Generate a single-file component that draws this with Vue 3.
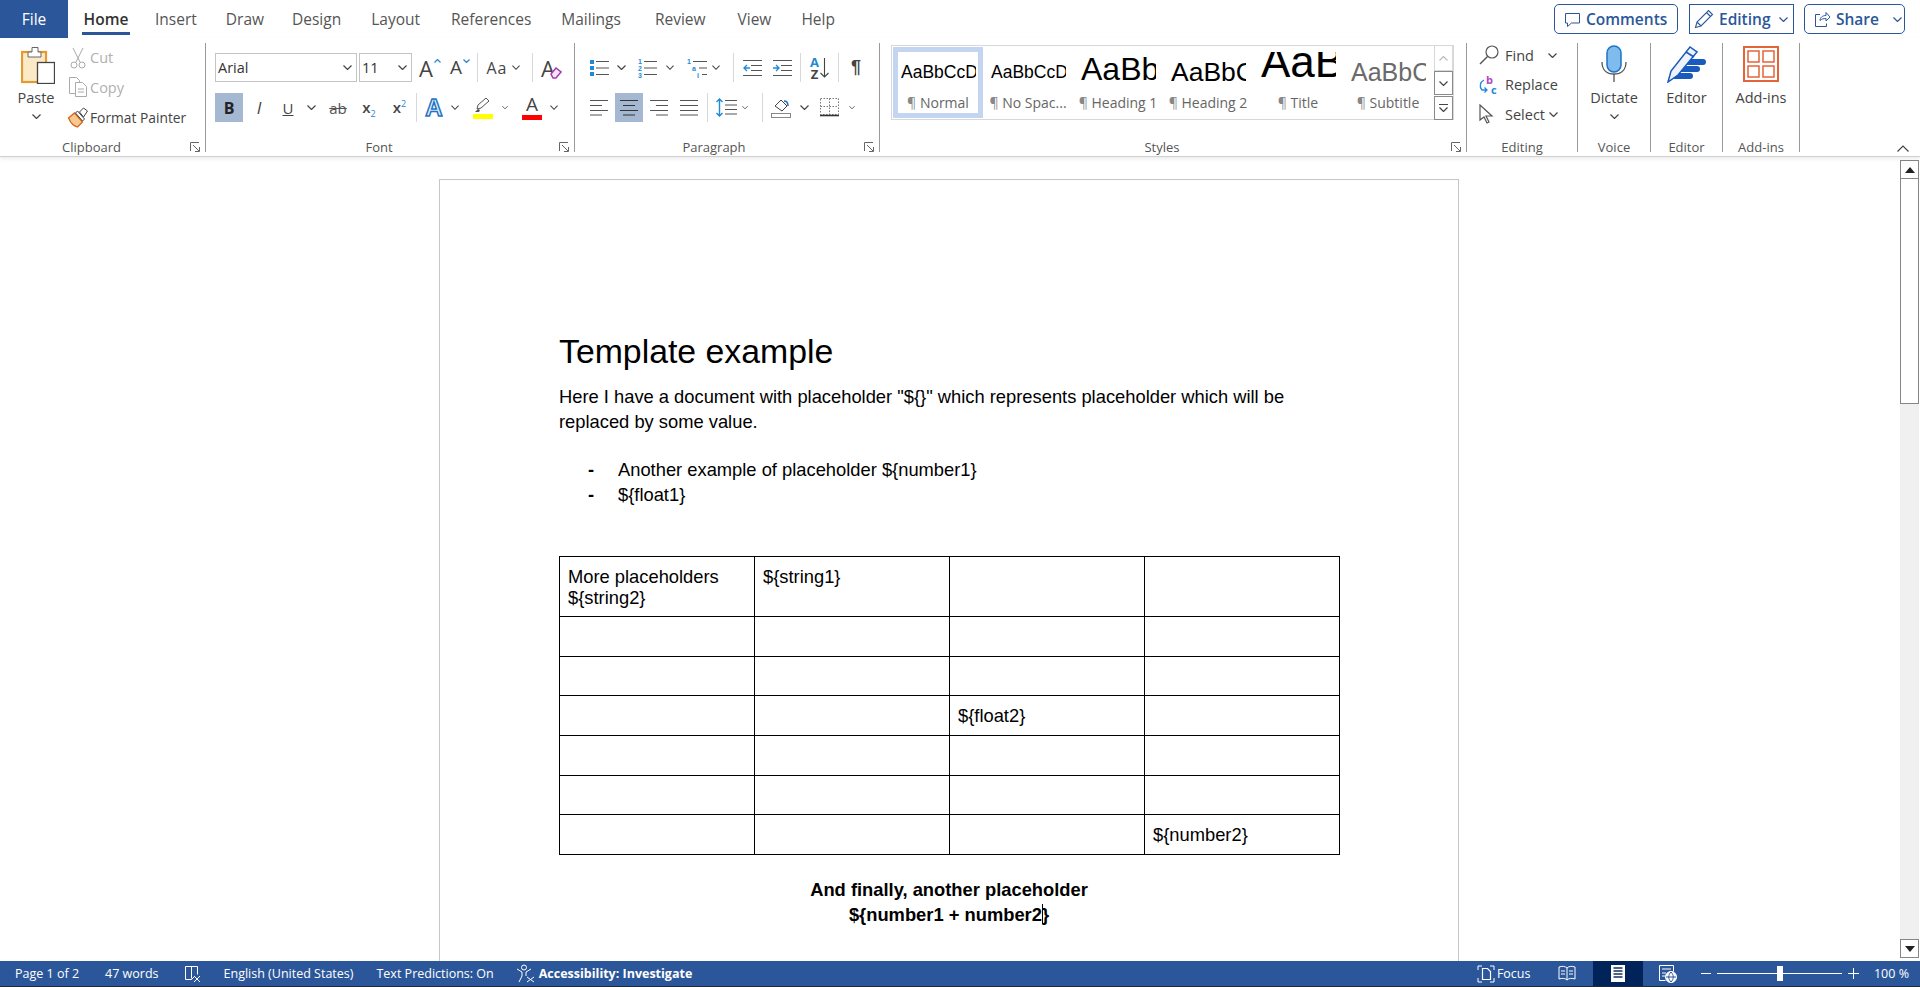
<template>
  <div class="word">
    <!-- tabs -->
    <div class="tabs">
      <div class="file">File</div>
      <div v-for="t in tabs" :key="t.name" class="tab" :class="[t.cls, { on: t.name === 'Home' }]">{{ t.name }}</div>
      <div class="top-actions">
        <button class="act comments">
          <svg width="17" height="17" viewBox="0 0 17 17" fill="none" stroke="#2b579a"><path d="M1.5 2.5h14v9.5h-8l-4 3.5v-3.5h-2z" /></svg>
          Comments
        </button>
        <button class="act editing">
          <svg width="20" height="20" viewBox="0 0 20 20" fill="none" stroke="#2b579a" stroke-width="1.1"><path d="M1.5 18.5l1.5-5.5L14.5 1.5l4 4L7 17z M3 13l4 4 M12.5 3.5l4 4" /></svg>
          Editing
          <Chev color="#2b579a" class="act-chev" />
        </button>
        <button class="act share">
          <svg width="17" height="17" viewBox="0 0 17 17" fill="none" stroke="#2b579a"><path d="M6 9.5c0-3 2.5-5 6-5V1.500l4 4.500-4 4V7.500c-2.500 0-4.500.5-6 2zM6 3.500H1.500v12h11v-3" /></svg>
          Share
          <Chev color="#2b579a" class="share-chev" />
        </button>
      </div>
    </div>

    <!-- ribbon -->
    <div class="ribbon">
      <section class="group g-clip">
        <div class="clip-body">
          <div class="big paste">
            <svg width="34" height="38" viewBox="0 0 34 38">
              <rect x="1" y="6" width="24" height="30" fill="#fbe9c8" stroke="#e59a2f" stroke-width="2.200" />
              <path d="M7 11V6h4V1.500h6V6h3v5z" fill="#fff" stroke="#666" />
              <rect x="16.500" y="16.500" width="17" height="21" fill="#fff" stroke="#444" stroke-width="1.300" />
            </svg>
            <span class="big-text">Paste</span>
            <Chev class="big-chev" />
          </div>
          <div class="clip-col">
            <div class="clip-row off">
              <svg width="16" height="22" viewBox="0 0 16 22" fill="none" stroke="#aaa"><path d="M3 1l7 14M13 1L6 15" /><circle cx="4" cy="18" r="3" /><circle cx="12" cy="18" r="3" /></svg>
              <span>Cut</span>
            </div>
            <div class="clip-row off">
              <svg width="20" height="22" viewBox="0 0 20 22" fill="#fff" stroke="#aaa"><path d="M1.500 1.500h7l3 3v13h-10z" /><path d="M7.500 6.500h7l4 4v10h-11z" /><path d="M10 13h6M10 16h6" /></svg>
              <span>Copy</span>
            </div>
            <div class="clip-row painter">
              <svg width="21" height="21" viewBox="0 0 21 21"><path d="M1 11l6-5 8 9-5 5c-3-1-6-2-9-9z" fill="#f8c98f" stroke="#d8641b" stroke-width="1.300" /><path d="M8 6l7 8 2-2-7-8z" fill="#fff" stroke="#444" /><path d="M12 5l4-4 4 3-4 6z" fill="#fff" stroke="#444" /></svg>
              <span>Format Painter</span>
            </div>
          </div>
        </div>
        <div class="glabel clip-label">Clipboard</div>
        <Launch />
      </section>

      <section class="group g-font">
        <div class="row r1">
          <div class="combo name">Arial<Chev /></div>
          <div class="combo size">11<Chev /></div>
          <span class="w-3" />
          <div class="tb w-30"><span class="ga lg">A</span><svg class="caret-up" width="7" height="4" viewBox="0 0 7 4" fill="none" stroke="#2b88d8" stroke-width="1.300"><path d="M.5 3.500L3.500.5l3 3" /></svg></div>
          <div class="tb w-30"><span class="ga md">A</span><svg class="caret-up" width="7" height="4" viewBox="0 0 7 4" fill="none" stroke="#2b88d8" stroke-width="1.300"><path d="M.5.5l3 3 3-3" /></svg></div>
          <span class="w-2" /><i class="sep" /><span class="w-4" />
          <div class="tb w-30"><span class="ga aa">Aa</span></div>
          <div class="tb w-8"><Chev /></div>
          <span class="w-12" /><i class="sep" />
          <div class="tb w-37">
            <span class="ga lg">A</span>
            <svg class="eraser" width="12" height="12" viewBox="0 0 12 12"><path d="M1 7l5-6 5 4-5 6H3z" fill="#f4e4f6" stroke="#a23fb0" stroke-width="1.500" /></svg>
          </div>
        </div>
        <div class="row r2">
          <div class="tb w-28 active"><b class="bold-b">B</b></div>
          <div class="tb w-32"><i class="ital">I</i></div>
          <div class="tb w-26"><span class="und">U</span></div>
          <div class="tb w-20"><Chev /></div>
          <div class="tb w-34"><span class="strike">ab</span></div>
          <div class="tb w-28"><span class="xs">x<sub>2</sub></span></div>
          <div class="tb w-33"><span class="xs">x<sup>2</sup></span></div>
          <i class="sep" />
          <div class="tb w-34"><span class="fx">A</span></div>
          <div class="tb w-8"><Chev /></div>
          <span class="w-5" />
          <div class="tb w-38 stack">
            <svg width="20" height="16" viewBox="0 0 20 16"><path d="M4 12l1-4 8-7 3 3-8 7z" fill="#fff" stroke="#555" /><path d="M2 15l3-3 2 1-1 2z" fill="#555" /></svg>
            <i class="bar yellow" />
          </div>
          <div class="tb w-6"><Chev /></div>
          <span class="w-6" />
          <div class="tb w-36 stack">
            <span class="ga fc">A</span>
            <i class="bar red" />
          </div>
          <div class="tb w-8"><Chev /></div>
        </div>
        <div class="glabel font-label">Font</div>
        <Launch />
      </section>

      <section class="group g-para">
        <div class="row r1">
          <div class="tb w-30">
            <svg width="20" height="20" viewBox="0 0 20 20"><path d="M1 2h4v4H1zM1 8h4v4H1zM1 14h4v4H1z" fill="#1f8ad6" /><path d="M7 3.500h13M7 10h13M7 16.500h13" stroke="#555" stroke-width="1.200" /></svg>
          </div>
          <div class="tb w-14"><Chev /></div>
          <div class="tb w-38">
            <svg class="ico" width="20" height="20" viewBox="0 0 20 20"><text x="1" y="6" class="nm">1</text><text x="1" y="13" class="nm">2</text><text x="1" y="20" class="nm">3</text><path d="M7 3.500h13M7 10h13M7 16.500h13" stroke="#555" stroke-width="1.200" /></svg>
          </div>
          <div class="tb w-8"><Chev /></div>
          <span class="w-8" />
          <div class="tb w-30">
            <svg class="ico" width="20" height="20" viewBox="0 0 20 20"><text x="0" y="6" class="nm">1</text><text x="5" y="13" class="nm">a</text><text x="10" y="20" class="nm">i</text><path d="M6 3.500h14M12 10h8M15 16.500h5" stroke="#555" stroke-width="1.200" /></svg>
          </div>
          <div class="tb w-8"><Chev /></div>
          <span class="w-13" /><i class="sep" />
          <div class="tb w-36">
            <svg width="19" height="18" viewBox="0 0 19 18" fill="none"><path d="M0 1.500h19M8 6.500h11M8 11.500h11M0 16.500h19" stroke="#555" stroke-width="1.200" /><path d="M7 9H1M4 6L1 9l3 3" stroke="#1f8ad6" stroke-width="1.300" /></svg>
          </div>
          <div class="tb w-24">
            <svg width="19" height="18" viewBox="0 0 19 18" fill="none"><path d="M0 1.500h19M8 6.500h11M8 11.500h11M0 16.500h19" stroke="#555" stroke-width="1.200" /><path d="M0 9h6M3 6l3 3-3 3" stroke="#1f8ad6" stroke-width="1.300" /></svg>
          </div>
          <span class="w-6" /><i class="sep" />
          <div class="tb w-37">
            <div class="sort-az"><span class="az-a">A</span><span class="az-z">Z</span></div>
            <svg width="9" height="20" viewBox="0 0 9 20" fill="none" stroke="#444" stroke-width="1.100"><path d="M4.500 0v19M.5 15l4 4 4-4" /></svg>
          </div>
          <i class="sep" />
          <div class="tb w-34"><span class="pil">¶</span></div>
        </div>
        <div class="row r2">
          <div class="tb w-30"><svg width="18" height="17" viewBox="0 0 18 17" stroke="#555" stroke-width="1.200"><path d="M0 1.500h18M0 6.500h12M0 11.500h18M0 16h12" /></svg></div>
          <span class="w-1" />
          <div class="tb w-28 active"><svg width="18" height="17" viewBox="0 0 18 17" stroke="#333" stroke-width="1.200"><path d="M0 1.500h18M3 6.500h12M0 11.500h18M3 16h12" /></svg></div>
          <div class="tb w-32"><svg width="18" height="17" viewBox="0 0 18 17" stroke="#555" stroke-width="1.200"><path d="M0 1.500h18M6 6.500h12M0 11.500h18M6 16h12" /></svg></div>
          <div class="tb w-28"><svg width="18" height="17" viewBox="0 0 18 17" stroke="#555" stroke-width="1.200"><path d="M0 1.500h18M0 6.500h18M0 11.500h18M0 16h18" /></svg></div>
          <span class="w-4" /><i class="sep" /><span class="w-2" />
          <div class="tb w-32">
            <svg width="21" height="19" viewBox="0 0 21 19" fill="none"><path d="M9 2.500h12M9 7h12M9 11.500h12M9 16h12" stroke="#555" stroke-width="1.200" /><path d="M3.500 1v17M.5 4l3-3 3 3M.5 15l3 3 3-3" stroke="#1f8ad6" stroke-width="1.400" /></svg>
          </div>
          <div class="tb w-6"><Chev /></div>
          <span class="w-14" /><i class="sep" />
          <div class="tb w-36">
            <svg width="20" height="20" viewBox="0 0 20 20" fill="none"><path d="M4 8l6-6 6 6-5 5z" fill="#fff" stroke="#444" /><path d="M13 3c3 0 4 2 4 5" stroke="#1f6fc0" stroke-width="1.500" /><rect x=".5" y="15.500" width="19" height="4" stroke="#888" /></svg>
          </div>
          <div class="tb w-10"><Chev /></div>
          <div class="tb w-40">
            <svg width="19" height="19" viewBox="0 0 19 19" fill="none"><path d="M.5.500h18v16H.5zM9.500.5v16M.5 8.500h18" stroke="#777" stroke-dasharray="1.500 1.500" /><path d="M0 17.500h19" stroke="#333" stroke-width="1.600" /></svg>
          </div>
          <div class="tb w-6"><Chev /></div>
        </div>
        <div class="glabel para-label">Paragraph</div>
        <Launch />
      </section>

      <section class="group g-styles">
        <div class="gallery">
          <div class="items">
            <div v-for="s in styles" :key="s.name" class="style" :class="{ sel: s.sel }">
              <div class="preview" :class="s.cls"><span>{{ s.sample }}</span></div>
              <div class="style-name"><span class="pm">¶</span> {{ s.name }}</div>
            </div>
          </div>
          <div class="scroller">
            <div class="sc up"><Chev color="#bbb" class="flip" /></div>
            <div class="sc dark"><Chev /></div>
            <div class="sc dark more"><i class="dash" /><Chev /></div>
          </div>
        </div>
        <div class="glabel styles-label">Styles</div>
        <Launch />
      </section>

      <section class="group g-edit">
        <div class="edit-rows">
          <div class="edit-row">
            <span class="edit-ico"><svg width="20" height="20" viewBox="0 0 20 20" fill="none" stroke="#555" stroke-width="1.200"><circle cx="13" cy="7" r="6" /><path d="M8.500 11.500L1 19" stroke-width="1.500" /></svg></span>
            Find<Chev class="ml-14" />
          </div>
          <div class="edit-row">
            <span class="edit-ico">
              <svg class="ico" width="20" height="20" viewBox="0 0 20 20" fill="none"><text x="7" y="9" class="rb">b</text><text x="12" y="19" class="rc">c</text><path d="M5 5C1 7 0 12 3 15h5M5.500 12.500L8 15l-2.500 2.500" stroke="#1f8ad6" stroke-width="1.300" /></svg>
            </span>
            Replace
          </div>
          <div class="edit-row">
            <span class="edit-ico"><svg width="16" height="20" viewBox="0 0 16 20" fill="#fff" stroke="#555" stroke-width="1.200"><path d="M1 1v15l4-3 3 6 2-1-3-6h6z" /></svg></span>
            Select<Chev class="ml-4" />
          </div>
        </div>
        <div class="glabel">Editing</div>
      </section>

      <section class="group g-voice">
        <div class="big mic">
          <svg width="26" height="38" viewBox="0 0 26 38" fill="none">
            <rect x="6" y="1" width="14" height="26" rx="7" fill="#7fbbec" stroke="#1b74c9" stroke-width="1.500" />
            <path d="M1 17c0 8 5 12 12 12s12-4 12-12M13 29v8" stroke="#555" stroke-width="1.300" />
          </svg>
          <span class="big-text">Dictate</span>
          <Chev class="big-chev" />
        </div>
        <div class="glabel">Voice</div>
      </section>

      <section class="group g-editor">
        <div class="big edit-big">
          <svg width="40" height="38" viewBox="0 0 40 38">
            <path d="M14 14h22a3 3 0 0 1 0 6H14zM10 21h20a3 3 0 0 1 0 6H10zM7 28h16a3 3 0 0 1 0 6H7z" fill="#185abd" />
            <path d="M1 37l3-11L23 2l7 5-19 23z" fill="#eef3fa" stroke="#185abd" stroke-width="1.500" />
            <path d="M19 7l8 5" stroke="#185abd" stroke-width="1.500" />
          </svg>
          <span class="big-text">Editor</span>
        </div>
        <div class="glabel">Editor</div>
      </section>

      <section class="group g-addins">
        <div class="big add-big">
          <svg width="36" height="36" viewBox="0 0 36 36" fill="none" stroke="#e2653a" stroke-width="1.500">
            <rect x="1" y="1" width="34" height="34" stroke-width="2" />
            <rect x="5" y="5" width="11" height="11" /><rect x="20" y="5" width="11" height="11" />
            <rect x="5" y="20" width="11" height="11" /><rect x="20" y="20" width="11" height="11" />
          </svg>
          <span class="big-text">Add-ins</span>
        </div>
        <div class="glabel">Add-ins</div>
      </section>

      <div class="collapse"><svg width="12" height="7" viewBox="0 0 12 7" fill="none" stroke="#444" stroke-width="1.200"><path d="M.5 6.500L6 1l5.500 5.500" /></svg></div>
    </div>

    <!-- document -->
    <div class="doc-area">
      <div class="doc">
        <div class="page">
          <h1>Template example</h1>
          <p class="intro">Here I have a document with placeholder "${}" which represents placeholder which will be replaced by some value.</p>
          <ul>
            <li>Another example of placeholder ${number1}</li>
            <li>${float1}</li>
          </ul>
          <table>
            <colgroup><col class="c1" /><col class="c2" /><col class="c3" /><col class="c4" /></colgroup>
            <tr v-for="(r, i) in rows" :key="i" :class="r.cls">
              <td v-for="(c, j) in r.cells" :key="j"><template v-for="(l, k) in c" :key="k">{{ l }}<br v-if="k < c.length - 1" /></template></td>
            </tr>
          </table>
          <p class="final">And finally, another placeholder<br />${number1 + number2<span class="cursor" />}</p>
        </div>
      </div>
      <div class="vscroll">
        <div class="vbtn"><svg width="10" height="6" viewBox="0 0 10 6"><path d="M5 0l5 6H0z" fill="#222" /></svg></div>
        <div class="thumb" />
        <div class="track" />
        <div class="vbtn"><svg width="10" height="6" viewBox="0 0 10 6"><path d="M0 0h10L5 6z" fill="#222" /></svg></div>
      </div>
    </div>

    <!-- status bar -->
    <footer class="status">
      <span class="st page-no">Page 1 of 2</span>
      <span class="st words">47 words</span>
      <svg class="st-book" width="18" height="18" viewBox="0 0 18 18" fill="none" stroke="#fff"><path d="M1.500 1.500h12v8M7.500 1.500v12M1.500 1.500v13h6l3-3" /><path d="M10 11l6 6M16 11l-6 6" /></svg>
      <span class="st lang">English (United States)</span>
      <span class="st pred">Text Predictions: On</span>
      <svg class="st-acc" width="19" height="19" viewBox="0 0 19 19" fill="none" stroke="#fff"><circle cx="8" cy="3.500" r="2.500" /><path d="M1 5l5 3v4l-3 6M15 5l-5 3v4M11 13l7 5M18 13l-7 5" /></svg>
      <b class="st acc">Accessibility: Investigate</b>
      <div class="st-right">
        <svg width="18" height="18" viewBox="0 0 18 18" fill="none" stroke="#fff"><path d="M1 5V1h4M13 1h4v4M1 13v4h4M13 17h4v-4" /><path d="M5.500 3.500h5l3 3v8h-8z" stroke-width="1.200" /></svg>
        <span class="focus">Focus</span>
        <svg class="read" width="18" height="17" viewBox="0 0 18 17" fill="none" stroke="#fff"><path d="M1 2c3-1 6-1 8 1 2-2 5-2 8-1v12c-3-1-6-1-8 1-2-2-5-2-8-1zM9 3v12M3 6h4M3 9h4M11 6h4M11 9h4" /></svg>
        <div class="print">
          <svg width="14" height="17" viewBox="0 0 14 17" fill="#fff"><path d="M0 0h14v17H0z" /><path d="M2.500 3h9M2.500 6h9M2.500 9h9M2.500 12h9" stroke="#16305c" stroke-width="1.500" /></svg>
        </div>
        <svg class="web" width="18" height="18" viewBox="0 0 18 18" fill="none" stroke="#fff"><path d="M.5.5h14v6M.5.5v15h6M3 4h9M3 8h4M3 11h3" /><circle cx="12" cy="12" r="5.500" fill="#fff" /><path d="M7 12h10M12 7c-3 3-3 7 0 10M12 7c3 3 3 7 0 10" stroke="#2b579a" /></svg>
        <span class="minus" />
        <div class="slider"><i class="knob" /></div>
        <svg class="plus" width="11" height="11" viewBox="0 0 11 11" stroke="#fff"><path d="M5.500 0v11M0 5.500h11" /></svg>
        <span class="zoom">100 %</span>
      </div>
    </footer>
  </div>
</template>

<script setup>
import { h } from "vue";

// small chevron used by almost every ribbon control
const Chev = (props) =>
  h("svg", { width: 9, height: 5, viewBox: "0 0 9 5", fill: "none", stroke: props.color || "#444", "stroke-width": 1.2, class: "chev" }, [
    h("path", { d: "M.5.5l4 4 4-4" }),
  ]);
Chev.props = ["color"];

const Launch = () =>
  h("svg", { width: 10, height: 10, viewBox: "0 0 10 10", fill: "none", stroke: "#666", class: "launch" }, [
    h("path", { d: "M.5 9V.5H9M3 3l6 6M9.500 5v4.500H5" }),
  ]);

const tabs = [
  { name: "Home", cls: "t-home" },
  { name: "Insert", cls: "t-insert" },
  { name: "Draw", cls: "t-draw" },
  { name: "Design", cls: "t-design" },
  { name: "Layout", cls: "t-layout" },
  { name: "References", cls: "t-refs" },
  { name: "Mailings", cls: "t-mail" },
  { name: "Review", cls: "t-review" },
  { name: "View", cls: "t-view" },
  { name: "Help", cls: "t-help" },
];

const styles = [
  { name: "Normal", sample: "AaBbCcD", cls: "p-normal", sel: true },
  { name: "No Spac...", sample: "AaBbCcD", cls: "p-normal" },
  { name: "Heading 1", sample: "AaBb", cls: "p-h1" },
  { name: "Heading 2", sample: "AaBbC", cls: "p-h2" },
  { name: "Title", sample: "AaB", cls: "p-title" },
  { name: "Subtitle", sample: "AaBbC", cls: "p-sub" },
];

const blank = [[], [], [], []];
const rows = [
  { cls: "r-a", cells: [["More placeholders", "${string2}"], ["${string1}"], [], []] },
  { cls: "r-b", cells: blank },
  { cls: "r-c", cells: blank },
  { cls: "r-b", cells: [[], [], ["${float2}"], []] },
  { cls: "r-b", cells: blank },
  { cls: "r-c", cells: blank },
  { cls: "r-b", cells: [[], [], [], ["${number2}"]] },
];
</script>

<style>
html, body { margin: 0; overflow: hidden; background: #fff; }
</style>

<style scoped>
.word { width: 1920px; height: 987px; display: flex; flex-direction: column; overflow: hidden; font-family: "Open Sans", "Noto Sans", sans-serif; color: #444; background: #fff; }

/* tabs */
.tabs { height: 38px; display: flex; flex: none; font-size: 15.500px; }
.file { width: 68px; background: #2b579a; color: #fff; text-align: center; line-height: 38px; }
.tab { line-height: 38px; height: 35px; color: #555; flex: none; }
.tab.on { color: #333; font-weight: 600; border-bottom: 3px solid #2b579a; box-sizing: content-box; }
.t-home { margin-left: 14px; width: 48px; text-align: center; height: 32px; line-height: 38px; }
.t-insert { margin-left: 25px; }
.t-draw { margin-left: 29px; }
.t-design { margin-left: 28px; }
.t-layout { margin-left: 30px; }
.t-refs { margin-left: 31px; }
.t-mail { margin-left: 30px; }
.t-review { margin-left: 34px; }
.t-view { margin-left: 32px; }
.t-help { margin-left: 30px; }
.top-actions { margin-left: auto; margin-right: 15px; display: flex; padding-top: 4px; }
.act { height: 30px; box-sizing: border-box; border: 1px solid #2b579a; background: #fff; color: #2b579a; font: 600 15.500px "Open Sans", sans-serif; display: flex; align-items: center; gap: 5px; padding: 0 0 0 9px; border-radius: 5px; }
.comments { width: 124px; }
.editing { width: 105px; border-radius: 0; padding-left: 4px; margin-left: 11px; }
.share { width: 101px; padding-left: 9px; margin-left: 10px; }
.act-chev { margin-left: 3px; }
.share-chev { margin-left: 9px; }

/* ribbon */
.ribbon { height: 119px; flex: none; box-sizing: border-box; padding-top: 5px; display: flex; position: relative; border-bottom: 1px solid #d0d0d0; box-shadow: 0 2px 4px rgba(0, 0, 0, .08); z-index: 2; background: #fff; font-size: 14px; }
.group { height: 109px; box-sizing: border-box; border-right: 1px solid #9a9a9a; position: relative; flex: none; display: flex; flex-direction: column; }
.g-clip { width: 206px; }
.g-font { width: 369px; padding-left: 9px; }
.g-para { width: 305px; padding-left: 9px; }
.g-styles { width: 587px; padding-left: 11px; }
.g-edit { width: 111px; }
.g-voice { width: 73px; }
.g-editor { width: 72px; }
.g-addins { width: 77px; }
.glabel { position: absolute; left: 0; right: 0; bottom: -3px; text-align: center; font-size: 13px; line-height: 16px; color: #555; }
.clip-label { right: 22px; }
.font-label { right: 22px; }
.para-label { right: 26px; }
.styles-label { right: 22px; }
.launch { position: absolute; right: 5px; bottom: 0; }
.collapse { position: absolute; right: 11px; bottom: 4px; line-height: 0; }

.clip-body { display: flex; }
.big { display: flex; flex-direction: column; align-items: center; padding-top: 3px; }
.big-text { margin-top: 4px; line-height: 20px; font-size: 14.500px; color: #444; }
.big-chev { margin-top: 6px; }
.paste { width: 60px; padding-left: 6px; }
.paste svg:first-child { margin-left: 3px; }
.clip-col { display: flex; flex-direction: column; }
.clip-row { height: 29.500px; display: flex; align-items: center; font-size: 14.500px; }
.clip-row svg { width: 24px; flex: none; }
.clip-row.off { color: #b0b0b0; }
.painter { font-size: 13.800px; margin-top: 1px; }
.mic, .edit-big, .add-big { padding-top: 2px; }
.add-big { padding-top: 3px; }
.add-big .big-text { margin-top: 6px; }
.edit-big .big-text, .mic .big-text { margin-top: 5px; }

.row { display: flex; align-items: center; height: 29px; }
.r1 { margin-top: 10px; }
.r2 { margin-top: 11px; }
.tb { display: flex; align-items: center; justify-content: center; flex: none; height: 29px; position: relative; }
.sep { width: 1px; height: 29px; background: #d8d8d8; flex: none; }
.active { background: #a5b8d2; }
.stack { flex-direction: column; gap: 1px; }
.w-1 { width: 1px; } .w-2 { width: 2px; } .w-3 { width: 3px; } .w-4 { width: 4px; } .w-5 { width: 5px; } .w-6 { width: 6px; } .w-8 { width: 8px; }
.w-10 { width: 10px; } .w-12 { width: 12px; } .w-13 { width: 13px; } .w-14 { width: 14px; } .w-20 { width: 20px; } .w-24 { width: 24px; } .w-26 { width: 26px; }
.w-28 { width: 28px; } .w-30 { width: 30px; } .w-32 { width: 32px; } .w-33 { width: 33px; } .w-34 { width: 34px; } .w-36 { width: 36px; } .w-37 { width: 37px; }
.w-38 { width: 38px; } .w-40 { width: 40px; }
.w-1, .w-2, .w-3, .w-4, .w-5, .w-6, .w-8, .w-10, .w-12, .w-13, .w-14 { flex: none; }

.combo { height: 29px; box-sizing: border-box; border: 1px solid #c4c4c4; display: flex; align-items: center; justify-content: space-between; padding: 0 4px 0 2px; font-size: 14.500px; color: #333; flex: none; }
.name { width: 142px; margin-right: 2px; }
.size { width: 53px; }
.ga { font-family: "Open Sans", sans-serif; color: #444; line-height: 1; }
.lg { font-size: 22px; }
.md { font-size: 19px; }
.aa { font-size: 16px; letter-spacing: 1px; }
.fc { font-size: 19px; line-height: 19px; }
.caret-up { margin-left: 1px; align-self: flex-start; margin-top: 6px; }
.eraser { margin: 10px 0 0 -5px; }
.bold-b { font-size: 16px; color: #222; font-weight: 700; }
.ital { font: italic 17px "Open Sans", sans-serif; color: #444; }
.und { font-size: 15px; text-decoration: underline; color: #444; }
.strike { font-size: 15px; text-decoration: line-through; color: #555; }
.xs { font-size: 15px; font-weight: 600; color: #444; line-height: 1; }
.xs sub, .xs sup { font-size: 9px; color: #1f8ad6; font-weight: 400; line-height: 0; }
.fx { font: 700 24px "Liberation Sans", sans-serif; color: #e8f2fb; -webkit-text-stroke: 1.500px #1f74c4; }
.bar { display: block; width: 20px; height: 5px; flex: none; }
.yellow { background: #ffff00; }
.red { background: #ff0000; }
.nm { font: 700 7px "Liberation Sans", sans-serif; fill: #1f8ad6; }
.sort-az { display: flex; flex-direction: column; align-items: center; line-height: 12px; margin-right: 1px; }
.az-a { font: 700 13px/12px "Open Sans", sans-serif; color: #1f8ad6; }
.az-z { font: 700 13px/12px "Open Sans", sans-serif; color: #444; }
.pil { font: 700 18px "Liberation Sans", sans-serif; color: #444; }
.rb { font: 700 11px "Open Sans", sans-serif; fill: #b04ac0; }
.rc { font: 700 11px "Open Sans", sans-serif; fill: #1f8ad6; }

/* styles gallery */
.gallery { margin-top: 2px; width: 563px; height: 75px; box-sizing: border-box; border: 1px solid #d8d8d8; display: flex; }
.items { width: 542px; padding-left: 1px; padding-top: 1px; display: flex; flex: none; box-sizing: border-box; }
.style { width: 90px; height: 71px; box-sizing: border-box; border: 5px solid transparent; flex: none; }
.style.sel { border-color: #c3d5f0; }
.preview { margin-left: 3px; width: 75px; height: 33px; overflow: hidden; display: flex; align-items: flex-end; white-space: nowrap; font-family: "Liberation Sans", sans-serif; color: #000; line-height: 1; }
.p-normal { font-size: 17.500px; padding-bottom: 4px; height: 29px; }
.p-h1 { font-size: 32px; padding-bottom: 0; }
.p-h2 { font-size: 26.500px; padding-bottom: 0; }
.p-title { font-size: 44px; height: 32px; padding-bottom: 1px; }
.p-sub { font-size: 25px; color: #6a6a6a; }
.style-name { margin-top: 9px; line-height: 18px; text-align: center; font-size: 14px; color: #666; white-space: nowrap; }
.pm { color: #888; }
.scroller { width: 19px; flex: none; display: flex; flex-direction: column; margin-top: -1px; margin-bottom: -1px; margin-right: -1px; }
.sc { box-sizing: border-box; width: 19px; border: 1px solid #d8d8d8; display: flex; align-items: center; justify-content: center; flex-direction: column; gap: 2px; }
.up { height: 26px; }
.dark { border-color: #8a8a8a; height: 24px; }
.more { margin-top: 1px; height: 24px; }
.flip { transform: rotate(180deg); }
.dash { width: 9px; height: 1px; background: #444; }

/* editing */
.edit-rows { display: flex; flex-direction: column; gap: 5.500px; padding-left: 12px; }
.edit-row { height: 24px; display: flex; align-items: center; font-size: 14.500px; }
.edit-ico { width: 26px; flex: none; display: flex; align-items: center; }
.ml-14 { margin-left: 14px; }
.ml-4 { margin-left: 4px; }

/* document */
.doc-area { flex: 1; display: flex; min-height: 0; background: #fff; }
.doc { flex: 1; overflow: hidden; padding: 22px 0 0 439px; }
.page { width: 1020px; height: 1320px; box-sizing: border-box; border: 1px solid #c6c6c6; padding: 151px 119px 0 119px; font: 18.330px/25px "Liberation Sans", sans-serif; color: #000; }
h1 { margin: 0; font: 400 33.800px/40px "Liberation Sans", sans-serif; }
.intro { margin: 13px 0 0; }
ul { margin: 23px 0 0; padding: 0 0 0 59px; list-style: none; }
li { position: relative; }
li::before { content: "-"; position: absolute; left: -30px; font-weight: 700; }
table { margin-top: 49px; border-collapse: collapse; table-layout: fixed; width: 780px; }
.c1 { width: 195px; } .c2 { width: 195px; } .c3 { width: 195px; } .c4 { width: 195px; }
td { border: 1px solid #000; padding: 9px 8px 0; vertical-align: top; line-height: 21px; box-sizing: border-box; }
.r-a td { height: 60px; }
.r-b td { height: 40px; }
.r-c td { height: 39px; }
.final { margin: 22px 0 0; text-align: center; font-weight: 700; }
.cursor { position: relative; }
.cursor::after { content: ""; position: absolute; left: 0; top: 0; width: 1px; height: 20px; background: #000; }

.vscroll { width: 20px; flex: none; box-sizing: border-box; padding: 3px 1px 3px 0; display: flex; flex-direction: column; }
.vbtn { height: 19px; box-sizing: border-box; border: 1px solid #868686; background: #fff; display: flex; align-items: center; justify-content: center; flex: none; }
.thumb { height: 225px; box-sizing: border-box; border: 1px solid #868686; border-top: none; border-bottom-color: #868686; background: #fff; flex: none; }
.track { flex: 1; background: #f0f0f0; }

/* status */
.status { height: 26px; flex: none; box-sizing: border-box; background: #2b579a; border-bottom: 1px solid #1e2a3c; color: #fff; display: flex; align-items: center; font-size: 12.500px; position: relative; z-index: 3; }
.st { flex: none; white-space: nowrap; }
.page-no { margin-left: 15px; }
.words { margin-left: 26px; }
.st-book { margin-left: 25px; }
.lang { margin-left: 22px; }
.pred { margin-left: 23px; }
.st-acc { margin-left: 22px; }
.acc { margin-left: 4px; font-weight: 700; }
.st-right { margin-left: auto; display: flex; align-items: center; height: 25px; padding-right: 11px; }
.focus { margin-left: 2px; }
.read { margin-left: 28px; }
.print { margin-left: 17px; width: 50px; height: 25px; background: #00235a; display: flex; align-items: center; justify-content: center; }
.web { margin-left: 16px; }
.minus { margin-left: 24px; width: 10px; height: 1px; background: #fff; }
.slider { margin-left: 6px; width: 125px; height: 1px; background: #fff; position: relative; }
.knob { position: absolute; left: 60px; top: -7px; width: 6px; height: 15px; background: #fff; }
.plus { margin-left: 6px; }
.zoom { margin-left: 14.500px; }
</style>
